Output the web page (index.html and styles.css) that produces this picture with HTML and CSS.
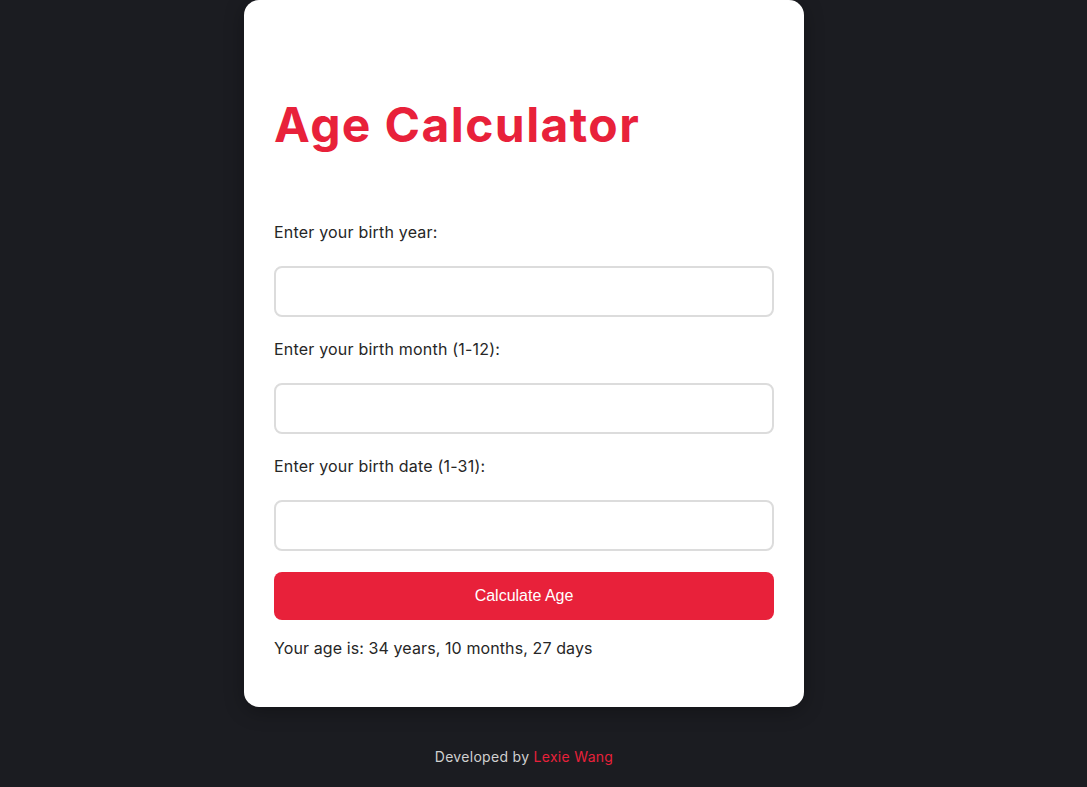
FILE: index.html
```html
<!DOCTYPE html>
<html lang="en">
<head>
<meta charset="utf-8">
<title>Age Calculator</title>
<link rel="stylesheet" href="styles.css">
</head>
<body>
<main class="card">
  <h1 class="title">Age Calculator</h1>
  <form class="form">
    <label class="label" for="year">Enter your birth year:</label>
    <input class="field" id="year" type="text">
    <label class="label" for="month">Enter your birth month (1-12):</label>
    <input class="field" id="month" type="text">
    <label class="label" for="day">Enter your birth date (1-31):</label>
    <input class="field" id="day" type="text">
    <button class="btn" type="button">Calculate Age</button>
  </form>
  <p class="result">Your age is: 34 years, 10 months, 27 days</p>
</main>
<footer class="footer">Developed by <a class="link" href="#">Lexie Wang</a></footer>
</body>
</html>
```
FILE: styles.css
```css
* { box-sizing: border-box; }
html, body { margin: 0; padding: 0; }
body {
  background: #1b1c21;
  font-family: "Inter", "Open Sans", sans-serif;
  min-height: 100vh;
  padding-right: 39px;
  display: flex;
  flex-direction: column;
  align-items: center;
}
.card {
  width: 560px;
  background: #ffffff;
  border-radius: 15px;
  padding: 100px 30px 47px;
  box-shadow: 0 4px 20px rgba(0,0,0,0.3);
}
.title {
  margin: 0 0 70px;
  color: #e8213a;
  font-size: 48px;
  font-weight: 700;
  line-height: 50px;
  letter-spacing: 1.4px;
}
.form {
  display: flex;
  flex-direction: column;
}
.label {
  color: #262626;
  font-size: 16px;
  line-height: 24px;
  letter-spacing: 0.2px;
  margin-bottom: 22px;
}
.field {
  height: 51px;
  border: 2px solid #dcdcdc;
  border-radius: 8px;
  margin-bottom: 20px;
  font-size: 16px;
  padding: 0 12px;
}
.btn {
  margin-top: 1px;
  height: 48px;
  border: none;
  border-radius: 8px;
  background: #e8213a;
  color: #ffffff;
  font-family: "Liberation Sans", Arial, sans-serif;
  font-size: 16px;
}
.result {
  margin: 16px 0 0;
  color: #262626;
  font-size: 16px;
  line-height: 24px;
  letter-spacing: 0.1px;
}
.footer {
  margin-top: 40px;
  color: #d0d0d0;
  font-size: 14px;
  line-height: 20px;
  letter-spacing: 0.3px;
}
.link {
  color: #e8213a;
  text-decoration: none;
}
```
